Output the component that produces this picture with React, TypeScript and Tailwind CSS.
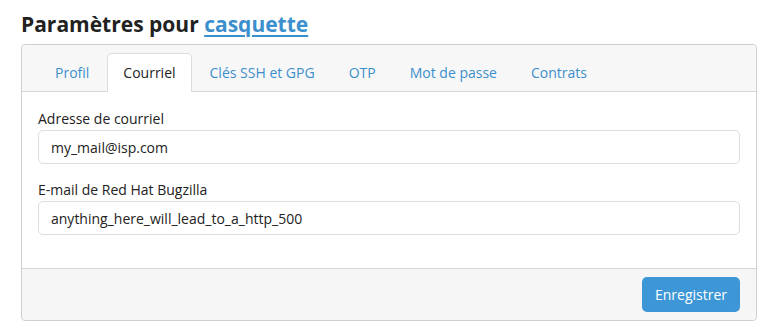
export default function App() {
  const tabs = ["Profil", "Courriel", "Clés SSH et GPG", "OTP", "Mot de passe", "Contrats"];
  const active = "Courriel";

  return (
    <div className="min-h-screen bg-white pt-[8px] font-['Open_Sans',sans-serif] text-[#222]">
      <h1 className="ml-[21px] text-[21px] font-bold leading-[32px] text-[#222]">
        Paramètres pour{" "}
        <a href="#" className="text-[#3c8fcd] underline underline-offset-[3px]">
          casquette
        </a>
      </h1>

      <div className="ml-[21px] mt-[4px] w-[736px] rounded-[4px] border border-[#cfcfcf]">
        <div className="flex rounded-t-[4px] border-b border-[#d6d6d6] bg-[#f7f7f7] px-[17px] pt-[8px]">
          {tabs.map((t) => (
            <div
              key={t}
              className={
                t === active
                  ? "-mb-px mr-[2px] h-[39px] rounded-t-[5px] border border-b-0 border-[#dcdcdc] bg-white px-[15px] pt-[8px] text-[14px] text-[#222]"
                  : "mr-[2px] h-[38px] border border-transparent px-[15px] pt-[8px] text-[14px] text-[#3c8fcd]"
              }
            >
              {t}
            </div>
          ))}
        </div>

        <div className="px-[16px] pb-[17px] pt-[17px]">
          <div className="mb-[16px]">
            <label className="mb-[1px] block text-[14px] leading-[20px] text-[#222]">Adresse de courriel</label>
            <input
              type="text"
              defaultValue="my_mail@isp.com"
              className="h-[34px] w-full rounded-[5px] border border-[#dedede] px-[12px] text-[14px] text-[#222] outline-none"
            />
          </div>
          <div className="mb-[16px]">
            <label className="mb-[1px] block text-[14px] leading-[20px] text-[#222]">E-mail de Red Hat Bugzilla</label>
            <input
              type="text"
              defaultValue="anything_here_will_lead_to_a_http_500"
              className="h-[34px] w-full rounded-[5px] border border-[#dedede] px-[12px] text-[14px] text-[#222] outline-none"
            />
          </div>
        </div>

        <div className="flex justify-end rounded-b-[4px] border-t border-[#d6d6d6] bg-[#f6f6f6] px-[16px] pb-[8px] pt-[8px]">
          <button className="h-[35px] w-[98px] rounded-[5px] bg-[#3d97d6] text-[14px] text-white">Enregistrer</button>
        </div>
      </div>
    </div>
  );
}
